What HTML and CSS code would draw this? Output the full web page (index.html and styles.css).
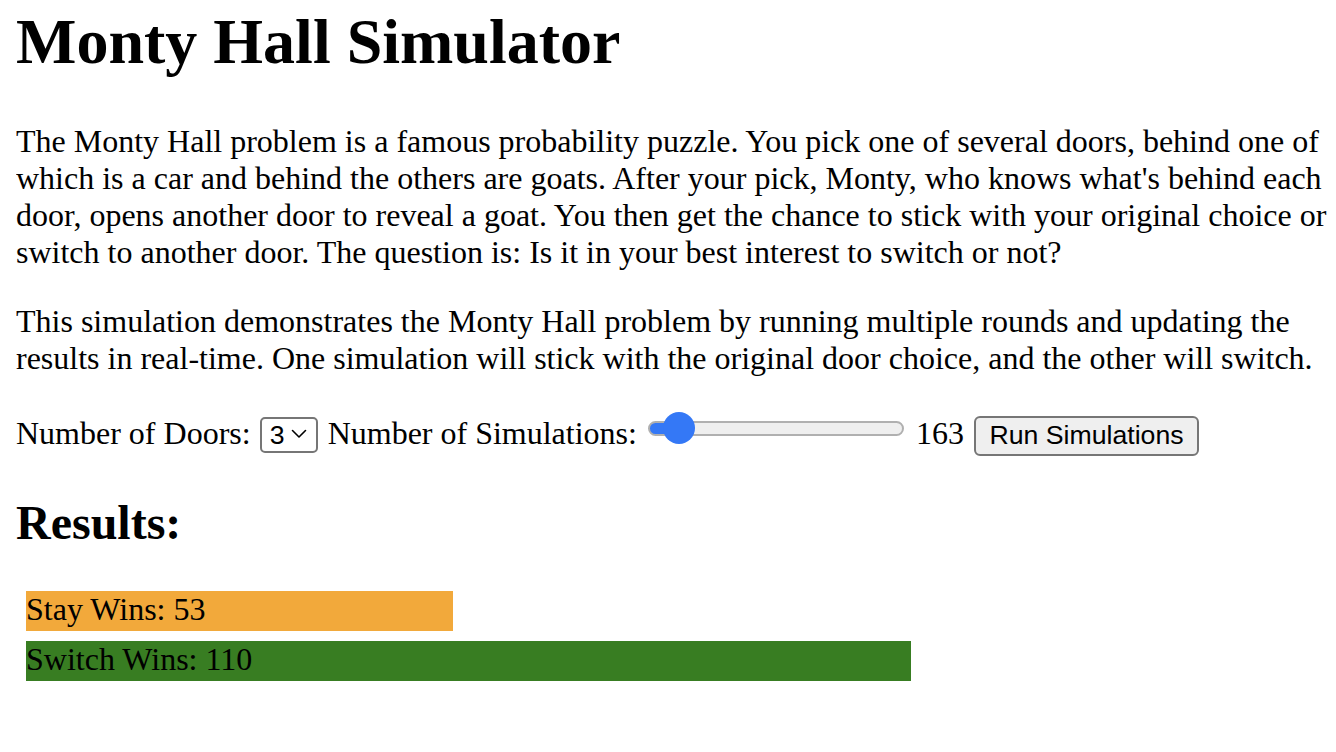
FILE: index.html
```html
<!DOCTYPE html>
<html lang="en">
<head>
<meta charset="utf-8">
<title>Monty Hall Simulator</title>
<link rel="stylesheet" href="styles.css">
</head>
<body>
<h1 class="title">Monty Hall Simulator</h1>
<p class="intro">The Monty Hall problem is a famous probability puzzle. You pick one of several doors, behind one of which is a car and behind the others are goats. After your pick, Monty, who knows what's behind each door, opens another door to reveal a goat. You then get the chance to stick with your original choice or switch to another door. The question is: Is it in your best interest to switch or not?</p>
<p class="intro">This simulation demonstrates the Monty Hall problem by running multiple rounds and updating the results in real-time. One simulation will stick with the original door choice, and the other will switch.</p>
<div class="controls">
<label for="doors">Number of Doors:</label>
<span class="select-wrap"><select id="doors" class="doors-select"><option>3</option><option>4</option><option>5</option></select><svg class="chevron" width="16" height="10" viewBox="0 0 16 10"><path d="M1.5 1.5 L8 8 L14.5 1.5" fill="none" stroke="#000" stroke-width="1.6" stroke-linecap="round" stroke-linejoin="round"/></svg></span>
<label for="sims">Number of Simulations:</label>
<input id="sims" class="sims-range" type="range" min="0" max="2700" value="163">
<span class="sims-value">163</span>
<button class="run-btn" type="button">Run Simulations</button>
</div>
<h2 class="results-title">Results:</h2>
<div class="results">
<div class="bar bar-stay" style="width:427px">Stay Wins: 53</div>
<div class="bar bar-switch" style="width:885px">Switch Wins: 110</div>
</div>
</body>
</html>
```
FILE: styles.css
```css
html, body {
  background: #fff;
}
body {
  margin: 5px 4px 16px 16px;
  font-family: "Liberation Serif", "Times New Roman", serif;
  font-size: 32px;
  color: #000;
}
.title {
  font-size: 64px;
  font-weight: bold;
  margin: 0 0 44px;
}
.intro {
  margin: 0 0 32px;
}
.controls {
  margin: 0;
  padding-top: 6px;
}
.select-wrap {
  position: relative;
  display: inline-block;
  margin: 0 2px 0 1px;
  vertical-align: baseline;
}
.doors-select {
  -webkit-appearance: none;
  appearance: none;
  font-family: "Liberation Sans", Arial, sans-serif;
  font-size: 26.67px;
  color: #000;
  background: #fff;
  border: 2px solid #767676;
  border-radius: 5px;
  width: 58px;
  height: 36px;
  padding: 0 0 0 8px;
  margin: 0;
  box-sizing: border-box;
  vertical-align: baseline;
}
.chevron {
  position: absolute;
  right: 11px;
  top: 14px;
  pointer-events: none;
}
.sims-range {
  -webkit-appearance: none;
  appearance: none;
  width: 256px;
  height: 32px;
  margin: 0 4px 0 3px;
  padding: 0;
  background: transparent;
  vertical-align: -4px;
  transform: translateY(-4px);
}
.sims-range::-webkit-slider-runnable-track {
  height: 15px;
  border-radius: 8px;
  border: 2px solid #b0b0b0;
  box-sizing: border-box;
  background: linear-gradient(to right, #3478f6 0, #3478f6 30px, #efefef 30px);
}
.sims-range::-webkit-slider-thumb {
  -webkit-appearance: none;
  appearance: none;
  width: 32px;
  height: 32px;
  border-radius: 50%;
  background: #3478f6;
  border: none;
  margin-top: -10.5px;
}
.sims-value {
  margin: 0;
}
.run-btn {
  font-family: "Liberation Sans", Arial, sans-serif;
  font-size: 26.67px;
  color: #000;
  background: #efefef;
  border: 2px solid #767676;
  border-radius: 6px;
  height: 40px;
  padding: 0 13.5px;
  margin: 0 0 0 2px;
  box-sizing: border-box;
  vertical-align: baseline;
}
.results-title {
  font-size: 48px;
  font-weight: bold;
  margin: 39.84px 0 40.84px;
}
.results {
  margin: 0;
}
.bar {
  height: 40px;
  margin: 10px;
  white-space: nowrap;
}
.bar-stay {
  background: #f2a93b;
}
.bar-switch {
  background: #387d22;
}
```
